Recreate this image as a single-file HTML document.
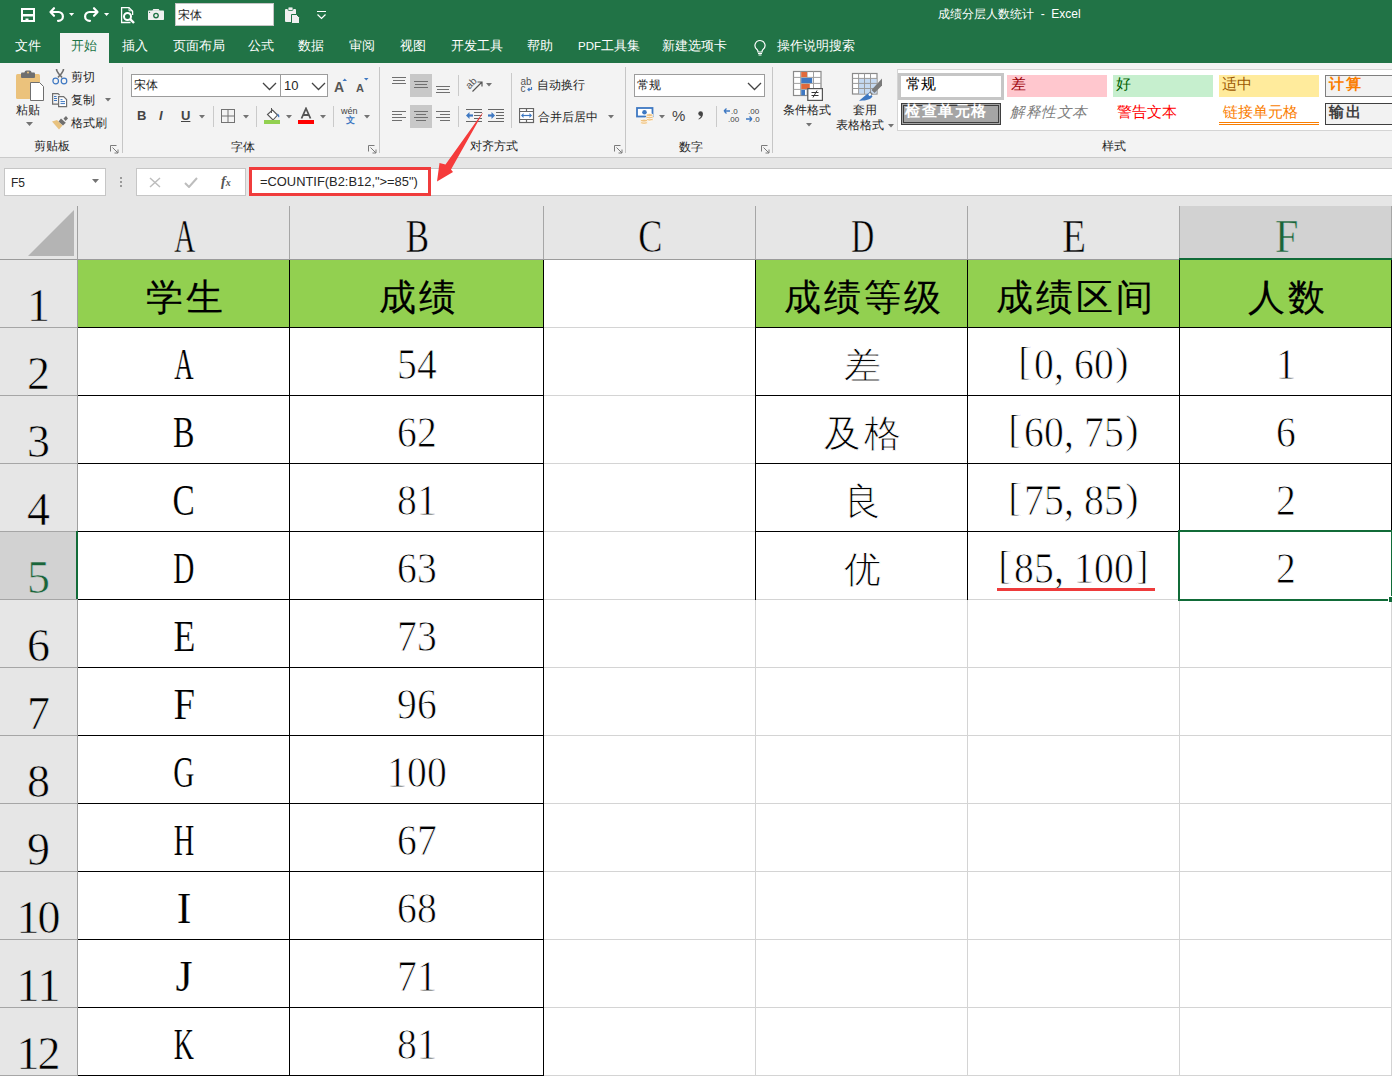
<!DOCTYPE html><html><head><meta charset="utf-8"><style>
html,body{margin:0;padding:0;}
body{width:1392px;height:1076px;overflow:hidden;position:relative;background:#fff;}
.t{position:absolute;white-space:nowrap;line-height:1.2;}
.b{position:absolute;}
.nar{display:inline-block;transform:scaleX(0.7);}
.h{display:inline-flex;width:20px;justify-content:center;}
.w{display:inline-flex;width:40px;justify-content:center;}
</style></head><body><div id="root">
<div class="b" style="left:0px;top:0px;width:1392px;height:63px;background:#217346"></div>
<svg class="b" style="left:20px;top:7px;" width="16" height="16" viewBox="0 0 16 16"><rect x="2" y="2" width="12" height="12" fill="none" stroke="#fff" stroke-width="2"/><rect x="3" y="7" width="10" height="2.5" fill="#fff"/><rect x="5.5" y="11.5" width="3" height="3.5" fill="#fff"/></svg>
<svg class="b" style="left:48px;top:6px;" width="28" height="16" viewBox="0 0 28 16"><path d="M6 2.2L2.5 6 6 9.8" fill="none" stroke="#fff" stroke-width="2.2" stroke-linejoin="round" stroke-linecap="round"/><path d="M3 6H10.5a4.4 4.4 0 0 1 0 8.8H10" fill="none" stroke="#fff" stroke-width="2.2" stroke-linecap="round"/><path d="M21 7h5.2l-2.6 3z" fill="#fff"/></svg>
<svg class="b" style="left:83px;top:6px;" width="28" height="16" viewBox="0 0 28 16"><path d="M11 2.2L14.5 6 11 9.8" fill="none" stroke="#fff" stroke-width="2.2" stroke-linejoin="round" stroke-linecap="round"/><path d="M14 6H6.5a4.4 4.4 0 0 0 0 8.8H7" fill="none" stroke="#fff" stroke-width="2.2" stroke-linecap="round"/><path d="M21 7h5.2l-2.6 3z" fill="#fff"/></svg>
<svg class="b" style="left:120px;top:6px;" width="16" height="18" viewBox="0 0 16 18"><path d="M10.5 16.5H1.6V1.6H9L12.6 5.2V9" fill="none" stroke="#fff" stroke-width="1.3"/><path d="M9 1.6v3.2h3.4" fill="none" stroke="#fff" stroke-width="0.9"/><circle cx="7.5" cy="10.5" r="3.5" fill="none" stroke="#fff" stroke-width="2"/><path d="M10.2 13.2L14 17" stroke="#fff" stroke-width="2.4"/></svg>
<svg class="b" style="left:147px;top:8px;" width="18" height="14" viewBox="0 0 18 14"><rect x="1" y="2.5" width="16" height="9.5" rx="0.8" fill="#f0f0f0"/><path d="M5.3 2.8L6.3 1H11.7L12.7 2.8z" fill="#f0f0f0"/><circle cx="9" cy="7.6" r="2.9" fill="#217346"/><circle cx="9" cy="7.6" r="1.5" fill="#f0f0f0"/><circle cx="2.6" cy="4.3" r="0.6" fill="#217346"/></svg>
<div class="b" style="left:175px;top:3px;width:99px;height:23px;background:#fff;border:1px solid #c6c6c6;box-sizing:border-box"></div>
<div class="t" style="left:178px;top:8px;font-size:12px;color:#262626;font-weight:normal;font-family:'Liberation Sans', sans-serif;">宋体</div>
<svg class="b" style="left:284px;top:6px;" width="20" height="18" viewBox="0 0 20 18"><rect x="1" y="3" width="11" height="13" rx="1" fill="#f0f0f0"/><rect x="4" y="1" width="5" height="3.5" rx="1" fill="#f0f0f0" stroke="#217346" stroke-width="0.8"/><path d="M7.5 8.5h5l3 3v6h-8z" fill="#f0f0f0" stroke="#217346" stroke-width="1"/></svg>
<svg class="b" style="left:316px;top:10px;" width="11" height="10" viewBox="0 0 11 10"><path d="M1 1.5h9" stroke="#fff" stroke-width="1"/><path d="M1.5 4.5l4 4 4-4" fill="none" stroke="#fff" stroke-width="1.2"/></svg>
<div class="t" style="left:938px;top:7px;font-size:12px;color:#fff;font-weight:normal;font-family:'Liberation Sans', sans-serif;">成绩分层人数统计&nbsp;&nbsp;-&nbsp;&nbsp;Excel</div>
<div class="b" style="left:60px;top:33px;width:49px;height:30px;background:#f3f3f3"></div>
<div class="t" style="left:15px;top:39px;font-size:12.5px;color:#fff;font-weight:normal;font-family:'Liberation Sans', sans-serif;">文件</div>
<div class="t" style="left:71px;top:39px;font-size:12.5px;color:#217346;font-weight:normal;font-family:'Liberation Sans', sans-serif;">开始</div>
<div class="t" style="left:122px;top:39px;font-size:12.5px;color:#fff;font-weight:normal;font-family:'Liberation Sans', sans-serif;">插入</div>
<div class="t" style="left:173px;top:39px;font-size:12.5px;color:#fff;font-weight:normal;font-family:'Liberation Sans', sans-serif;">页面布局</div>
<div class="t" style="left:248px;top:39px;font-size:12.5px;color:#fff;font-weight:normal;font-family:'Liberation Sans', sans-serif;">公式</div>
<div class="t" style="left:298px;top:39px;font-size:12.5px;color:#fff;font-weight:normal;font-family:'Liberation Sans', sans-serif;">数据</div>
<div class="t" style="left:349px;top:39px;font-size:12.5px;color:#fff;font-weight:normal;font-family:'Liberation Sans', sans-serif;">审阅</div>
<div class="t" style="left:400px;top:39px;font-size:12.5px;color:#fff;font-weight:normal;font-family:'Liberation Sans', sans-serif;">视图</div>
<div class="t" style="left:451px;top:39px;font-size:12.5px;color:#fff;font-weight:normal;font-family:'Liberation Sans', sans-serif;">开发工具</div>
<div class="t" style="left:527px;top:39px;font-size:12.5px;color:#fff;font-weight:normal;font-family:'Liberation Sans', sans-serif;">帮助</div>
<div class="t" style="left:578px;top:39px;font-size:12.5px;color:#fff;font-weight:normal;font-family:'Liberation Sans', sans-serif;"><span style="font-size:11.5px">PDF</span>工具集</div>
<div class="t" style="left:662px;top:39px;font-size:12.5px;color:#fff;font-weight:normal;font-family:'Liberation Sans', sans-serif;">新建选项卡</div>
<div class="t" style="left:777px;top:39px;font-size:12.5px;color:#fff;font-weight:normal;font-family:'Liberation Sans', sans-serif;">操作说明搜索</div>
<svg class="b" style="left:752px;top:39px;" width="16" height="17" viewBox="0 0 16 17"><path d="M8 1.5a5 5 0 0 0-3 9c0.8 0.7 1 1.5 1 2.5h4c0-1 0.2-1.8 1-2.5a5 5 0 0 0-3-9z" fill="none" stroke="#fff" stroke-width="1.2"/><path d="M6 14.5h4M6.5 16h3" stroke="#fff" stroke-width="1"/></svg>
<div class="b" style="left:0px;top:63px;width:1392px;height:94px;background:#f3f3f3"></div>
<div class="b" style="left:0px;top:157px;width:1392px;height:1px;background:#cacaca"></div>
<div class="b" style="left:122px;top:67px;width:1px;height:86px;background:#c6c6c6"></div>
<div class="b" style="left:379px;top:67px;width:1px;height:86px;background:#c6c6c6"></div>
<div class="b" style="left:625px;top:67px;width:1px;height:86px;background:#c6c6c6"></div>
<div class="b" style="left:772px;top:67px;width:1px;height:86px;background:#c6c6c6"></div>
<svg class="b" style="left:15px;top:70px;" width="30" height="32" viewBox="0 0 30 32"><rect x="1" y="4" width="24" height="25" rx="1.5" fill="#ebc27c"/><rect x="6" y="2.5" width="14" height="5.5" rx="1" fill="#6f6f6f"/><rect x="9.5" y="0.5" width="7" height="4" rx="2" fill="#6f6f6f"/><circle cx="13" cy="2.6" r="1" fill="#ebc27c"/><path d="M15.5 12.5h9l4 4v14h-13z" fill="#fff" stroke="#6f6f6f" stroke-width="1"/></svg>
<div class="t" style="left:16px;top:103px;font-size:12px;color:#262626;font-weight:normal;font-family:'Liberation Sans', sans-serif;">粘贴</div>
<svg class="b" style="left:26px;top:122px;" width="7" height="5" viewBox="0 0 7 5"><path d="M0 0h7l-3.5 4z" fill="#737373"/></svg>
<svg class="b" style="left:52px;top:68px;" width="16" height="17" viewBox="0 0 16 17"><path d="M4.5 1c0 3 2.5 5 5.5 8.5M11.5 1c0 3-2.5 5-5.5 8.5" fill="none" stroke="#6f6f6f" stroke-width="1.6"/><circle cx="3.7" cy="13" r="2.8" fill="none" stroke="#3e78c2" stroke-width="1.2"/><circle cx="12" cy="13" r="2.8" fill="none" stroke="#3e78c2" stroke-width="1.2"/></svg>
<div class="t" style="left:71px;top:70px;font-size:12px;color:#262626;font-weight:normal;font-family:'Liberation Sans', sans-serif;">剪切</div>
<svg class="b" style="left:51px;top:92px;" width="18" height="17" viewBox="0 0 18 17"><path d="M7 12.2H1.6V1.6H7L8.6 3.2" fill="none" stroke="#6f6f6f" stroke-width="1.2"/><path d="M3 4.5h2.5M3 6.5h3M3 8.5h3" stroke="#3e78c2" stroke-width="1"/><path d="M7.6 4.6H12.6L15.6 7.6V14.6H7.6Z" fill="#fff" stroke="#6f6f6f" stroke-width="1.2"/><path d="M9.5 7.6h2M9.5 9.6h4.5M9.5 11.6h4.5" stroke="#3e78c2" stroke-width="1"/></svg>
<div class="t" style="left:71px;top:93px;font-size:12px;color:#262626;font-weight:normal;font-family:'Liberation Sans', sans-serif;">复制</div>
<svg class="b" style="left:105px;top:98px;" width="6" height="4" viewBox="0 0 6 4"><path d="M0 0h6l-3 3.5z" fill="#737373"/></svg>
<svg class="b" style="left:51px;top:113px;" width="18" height="18" viewBox="0 0 18 18"><path d="M1 8.5L6 7L11.5 12.5L8 16.5Z" fill="#e8c27f"/><path d="M7.5 8.5L10 5.5L14.8 9.7L12 12.5Z" fill="#6f6f6f"/><path d="M12.5 5.5L15 3L17 5.5L14.5 8Z" fill="#6f6f6f"/></svg>
<div class="t" style="left:71px;top:116px;font-size:12px;color:#262626;font-weight:normal;font-family:'Liberation Sans', sans-serif;">格式刷</div>
<div class="t" style="left:34px;top:139px;font-size:12px;color:#262626;font-weight:normal;font-family:'Liberation Sans', sans-serif;">剪贴板</div>
<svg class="b" style="left:110px;top:145px;" width="9" height="9" viewBox="0 0 9 9"><path d="M0.5 0.5h6M0.5 0.5v6" stroke="#7a7a7a" stroke-width="1"/><path d="M2.5 2.5l5.5 5.5M8 4.5v3.5h-3.5" stroke="#7a7a7a" stroke-width="1" fill="none"/></svg>
<div class="b" style="left:131px;top:74px;width:150px;height:23px;background:#fff;border:1px solid #9c9c9c;box-sizing:border-box"></div>
<div class="b" style="left:280px;top:74px;width:48px;height:23px;background:#fff;border:1px solid #9c9c9c;box-sizing:border-box"></div>
<div class="t" style="left:134px;top:78px;font-size:12px;color:#262626;font-weight:normal;font-family:'Liberation Sans', sans-serif;">宋体</div>
<div class="t" style="left:284px;top:78px;font-size:13px;color:#262626;font-weight:normal;font-family:'Liberation Sans', sans-serif;">10</div>
<svg class="b" style="left:262px;top:82px;" width="15" height="9" viewBox="0 0 15 9"><path d="M1 1l6.5 6.5L14 1" fill="none" stroke="#444" stroke-width="1.3"/></svg>
<svg class="b" style="left:311px;top:82px;" width="15" height="9" viewBox="0 0 15 9"><path d="M1 1l6.5 6.5L14 1" fill="none" stroke="#444" stroke-width="1.3"/></svg>
<svg class="b" style="left:333px;top:76px;" width="18" height="18" viewBox="0 0 18 18"><text x="1" y="15.5" font-family="Liberation Sans" font-size="14" font-weight="bold" fill="#555">A</text><path d="M9.5 5h4.5l-2.25-2.6z" fill="#3e78c2"/></svg>
<svg class="b" style="left:355px;top:76px;" width="18" height="18" viewBox="0 0 18 18"><text x="1" y="15.5" font-family="Liberation Sans" font-size="11" font-weight="bold" fill="#555">A</text><path d="M9 2h4.5l-2.25 2.6z" fill="#3e78c2"/></svg>
<div class="t" style="left:137px;top:108px;font-size:13px;color:#444;font-weight:bold;font-family:'Liberation Sans', sans-serif;">B</div>
<div class="t" style="left:159px;top:108px;font-size:13px;color:#444;font-weight:bold;font-family:'Liberation Sans', sans-serif;font-style:italic">I</div>
<div class="t" style="left:181px;top:108px;font-size:13px;color:#444;font-weight:bold;font-family:'Liberation Sans', sans-serif;text-decoration:underline">U</div>
<svg class="b" style="left:199px;top:115px;" width="6" height="4" viewBox="0 0 6 4"><path d="M0 0h6l-3 3.5z" fill="#737373"/></svg>
<div class="b" style="left:213px;top:106px;width:1px;height:21px;background:#cacaca"></div>
<svg class="b" style="left:221px;top:109px;" width="14" height="14" viewBox="0 0 14 14"><rect x="0.5" y="0.5" width="13" height="13" fill="none" stroke="#737373"/><path d="M7 0.5v13M0.5 7h13" stroke="#737373"/></svg>
<svg class="b" style="left:243px;top:115px;" width="6" height="4" viewBox="0 0 6 4"><path d="M0 0h6l-3 3.5z" fill="#737373"/></svg>
<div class="b" style="left:256px;top:106px;width:1px;height:21px;background:#cacaca"></div>
<svg class="b" style="left:264px;top:107px;" width="18" height="18" viewBox="0 0 18 18"><path d="M3.5 7.5l5-4.5 5 5-4.5 5z" fill="#fff" stroke="#555" stroke-width="1.1"/><path d="M7.5 1v5" stroke="#555" stroke-width="1"/><path d="M13.5 6.5c1.5 1 2.5 2.5 1.5 4-1-.5-1.8-2-1.5-4z" fill="#3e78c2"/><rect x="0" y="13" width="16" height="4" fill="#92d050"/></svg>
<svg class="b" style="left:286px;top:115px;" width="6" height="4" viewBox="0 0 6 4"><path d="M0 0h6l-3 3.5z" fill="#737373"/></svg>
<svg class="b" style="left:298px;top:107px;" width="17" height="18" viewBox="0 0 17 18"><path d="M3.5 11.5L8 1.5l4.5 10M5.2 8h5.6" fill="none" stroke="#555" stroke-width="1.8"/><rect x="0" y="13" width="16" height="4" fill="#ff0000"/></svg>
<svg class="b" style="left:320px;top:115px;" width="6" height="4" viewBox="0 0 6 4"><path d="M0 0h6l-3 3.5z" fill="#737373"/></svg>
<div class="b" style="left:333px;top:106px;width:1px;height:21px;background:#cacaca"></div>
<div class="t" style="left:341px;top:107px;font-size:9px;color:#444;font-weight:normal;font-family:'Liberation Sans', sans-serif;line-height:9px">wén</div>
<div class="t" style="left:345.5px;top:116px;font-size:9px;color:#3e78c2;font-weight:bold;font-family:'Liberation Sans', sans-serif;line-height:9px">文</div>
<svg class="b" style="left:364px;top:115px;" width="6" height="4" viewBox="0 0 6 4"><path d="M0 0h6l-3 3.5z" fill="#737373"/></svg>
<div class="t" style="left:231px;top:140px;font-size:12px;color:#262626;font-weight:normal;font-family:'Liberation Sans', sans-serif;">字体</div>
<svg class="b" style="left:368px;top:145px;" width="9" height="9" viewBox="0 0 9 9"><path d="M0.5 0.5h6M0.5 0.5v6" stroke="#7a7a7a" stroke-width="1"/><path d="M2.5 2.5l5.5 5.5M8 4.5v3.5h-3.5" stroke="#7a7a7a" stroke-width="1" fill="none"/></svg>
<div class="b" style="left:410px;top:74px;width:22px;height:23px;background:#c8c8c8"></div>
<div class="b" style="left:410px;top:105px;width:22px;height:23px;background:#c8c8c8"></div>
<div class="b" style="left:392px;top:77px;width:14px;height:1px;background:#6f6f6f"></div>
<div class="b" style="left:393px;top:80px;width:12px;height:1px;background:#6f6f6f"></div>
<div class="b" style="left:392px;top:83px;width:14px;height:1px;background:#6f6f6f"></div>
<div class="b" style="left:414px;top:81px;width:14px;height:1px;background:#6f6f6f"></div>
<div class="b" style="left:415px;top:84px;width:12px;height:1px;background:#6f6f6f"></div>
<div class="b" style="left:414px;top:87px;width:14px;height:1px;background:#6f6f6f"></div>
<div class="b" style="left:436px;top:86px;width:14px;height:1px;background:#6f6f6f"></div>
<div class="b" style="left:437px;top:89px;width:12px;height:1px;background:#6f6f6f"></div>
<div class="b" style="left:436px;top:92px;width:14px;height:1px;background:#6f6f6f"></div>
<div class="b" style="left:392px;top:111px;width:14px;height:1px;background:#6f6f6f"></div>
<div class="b" style="left:392px;top:114px;width:10px;height:1px;background:#6f6f6f"></div>
<div class="b" style="left:392px;top:117px;width:14px;height:1px;background:#6f6f6f"></div>
<div class="b" style="left:392px;top:120px;width:10px;height:1px;background:#6f6f6f"></div>
<div class="b" style="left:414px;top:111px;width:14px;height:1px;background:#6f6f6f"></div>
<div class="b" style="left:416px;top:114px;width:10px;height:1px;background:#6f6f6f"></div>
<div class="b" style="left:414px;top:117px;width:14px;height:1px;background:#6f6f6f"></div>
<div class="b" style="left:416px;top:120px;width:10px;height:1px;background:#6f6f6f"></div>
<div class="b" style="left:436px;top:111px;width:14px;height:1px;background:#6f6f6f"></div>
<div class="b" style="left:440px;top:114px;width:10px;height:1px;background:#6f6f6f"></div>
<div class="b" style="left:436px;top:117px;width:14px;height:1px;background:#6f6f6f"></div>
<div class="b" style="left:440px;top:120px;width:10px;height:1px;background:#6f6f6f"></div>
<div class="b" style="left:458px;top:75px;width:1px;height:21px;background:#cacaca"></div>
<div class="b" style="left:458px;top:106px;width:1px;height:21px;background:#cacaca"></div>
<svg class="b" style="left:464px;top:76px;" width="20" height="18" viewBox="0 0 20 18"><text x="0" y="0" font-family="Liberation Sans" font-size="10" fill="#555" transform="translate(5.5 13.5) rotate(-45)">ab</text><path d="M8.5 15.5L17.5 6.5M13.5 6h4.5v4.5" fill="none" stroke="#555" stroke-width="1.2"/></svg>
<svg class="b" style="left:486px;top:83px;" width="6" height="4" viewBox="0 0 6 4"><path d="M0 0h6l-3 3.5z" fill="#737373"/></svg>
<div class="b" style="left:511px;top:73px;width:1px;height:55px;background:#cacaca"></div>
<svg class="b" style="left:520px;top:76px;" width="14" height="17" viewBox="0 0 14 17"><text x="0.5" y="8.5" font-family="Liberation Sans" font-size="10" fill="#555">ab</text><text x="0.5" y="15.8" font-family="Liberation Sans" font-size="10" fill="#555">c</text><path d="M11.5 11v2.5h-3.5M9.5 12l-1.5 1.5 1.5 1.5" fill="none" stroke="#3e78c2" stroke-width="1.2"/></svg>
<div class="t" style="left:537px;top:78px;font-size:12px;color:#262626;font-weight:normal;font-family:'Liberation Sans', sans-serif;">自动换行</div>
<svg class="b" style="left:466px;top:109px;" width="17" height="13" viewBox="0 0 17 13"><path d="M0 0.5h16M8 3.5h8M8 6.5h8M8 9.5h8M0 12.5h16" stroke="#666" stroke-width="1"/><path d="M7 6.5H2.5" stroke="#3e78c2" stroke-width="2.2"/><path d="M0 6.5l3.5-3.5v7z" fill="#3e78c2"/></svg>
<svg class="b" style="left:488px;top:109px;" width="17" height="13" viewBox="0 0 17 13"><path d="M0 0.5h16M8 3.5h8M8 6.5h8M8 9.5h8M0 12.5h16" stroke="#666" stroke-width="1"/><path d="M0 6.5H4.5" stroke="#3e78c2" stroke-width="2.2"/><path d="M7 6.5l-3.5-3.5v7z" fill="#3e78c2"/></svg>
<svg class="b" style="left:519px;top:108px;" width="16" height="16" viewBox="0 0 16 16"><rect x="0.5" y="0.5" width="14" height="14" fill="#fff" stroke="#666" stroke-width="1.2"/><path d="M0.5 3.5h14M0.5 11.5h14M7.5 0.5v3M7.5 11.5v3" stroke="#666" stroke-width="1.2"/><path d="M3.5 7.5h8" stroke="#3e78c2" stroke-width="1.2"/><path d="M2 7.5l2.5-2.5v5zM13 7.5l-2.5-2.5v5z" fill="#3e78c2"/></svg>
<div class="t" style="left:538px;top:110px;font-size:12px;color:#262626;font-weight:normal;font-family:'Liberation Sans', sans-serif;">合并后居中</div>
<svg class="b" style="left:608px;top:115px;" width="6" height="4" viewBox="0 0 6 4"><path d="M0 0h6l-3 3.5z" fill="#737373"/></svg>
<div class="t" style="left:470px;top:139px;font-size:12px;color:#262626;font-weight:normal;font-family:'Liberation Sans', sans-serif;">对齐方式</div>
<svg class="b" style="left:614px;top:145px;" width="9" height="9" viewBox="0 0 9 9"><path d="M0.5 0.5h6M0.5 0.5v6" stroke="#7a7a7a" stroke-width="1"/><path d="M2.5 2.5l5.5 5.5M8 4.5v3.5h-3.5" stroke="#7a7a7a" stroke-width="1" fill="none"/></svg>
<div class="b" style="left:634px;top:74px;width:131px;height:23px;background:#fff;border:1px solid #9c9c9c;box-sizing:border-box"></div>
<div class="t" style="left:637px;top:78px;font-size:12px;color:#262626;font-weight:normal;font-family:'Liberation Sans', sans-serif;">常规</div>
<svg class="b" style="left:747px;top:82px;" width="15" height="9" viewBox="0 0 15 9"><path d="M1 1l6.5 6.5L14 1" fill="none" stroke="#444" stroke-width="1.3"/></svg>
<svg class="b" style="left:636px;top:107px;" width="18" height="18" viewBox="0 0 18 18"><rect x="1" y="1" width="15.5" height="8.5" fill="#fff" stroke="#3e78c2" stroke-width="1.8"/><circle cx="8.5" cy="5.2" r="2.3" fill="#3e78c2"/><g fill="#efc27f" stroke="#fff" stroke-width="0.8"><ellipse cx="13.5" cy="12.5" rx="3.6" ry="1.5"/><ellipse cx="13.5" cy="10.3" rx="3.6" ry="1.5"/><ellipse cx="13.5" cy="8.1" rx="3.6" ry="1.5"/><ellipse cx="8" cy="15.8" rx="3.6" ry="1.5"/><ellipse cx="8" cy="13.6" rx="3.6" ry="1.5"/></g></svg>
<svg class="b" style="left:659px;top:115px;" width="6" height="4" viewBox="0 0 6 4"><path d="M0 0h6l-3 3.5z" fill="#737373"/></svg>
<div class="t" style="left:672px;top:107px;font-size:15px;color:#444;font-weight:normal;font-family:'Liberation Sans', sans-serif;">%</div>
<svg class="b" style="left:697px;top:111px;" width="8" height="9" viewBox="0 0 8 9"><circle cx="3.6" cy="2.6" r="2.3" fill="#444"/><path d="M5.8 2.8C6 5.5 4.5 7.5 1.8 8.6L1.4 7.9C3.2 6.8 4 5.6 3.8 4.2z" fill="#444"/></svg>
<div class="b" style="left:716px;top:106px;width:1px;height:21px;background:#cacaca"></div>
<svg class="b" style="left:723px;top:107px;" width="17" height="16" viewBox="0 0 17 16"><path d="M1 4h6M1 4l2.5-2.5M1 4l2.5 2.5" fill="none" stroke="#3e78c2" stroke-width="1.3"/><text x="8" y="7" font-family="Liberation Sans" font-size="8" fill="#444">.0</text><text x="5" y="15" font-family="Liberation Sans" font-size="8" fill="#444">.00</text></svg>
<svg class="b" style="left:745px;top:107px;" width="17" height="16" viewBox="0 0 17 16"><text x="3" y="7" font-family="Liberation Sans" font-size="8" fill="#444">.00</text><path d="M1 12h6M7 12l-2.5-2.5M7 12l-2.5 2.5" fill="none" stroke="#3e78c2" stroke-width="1.3"/><text x="8" y="15" font-family="Liberation Sans" font-size="8" fill="#444">.0</text></svg>
<div class="t" style="left:679px;top:140px;font-size:12px;color:#262626;font-weight:normal;font-family:'Liberation Sans', sans-serif;">数字</div>
<svg class="b" style="left:761px;top:145px;" width="9" height="9" viewBox="0 0 9 9"><path d="M0.5 0.5h6M0.5 0.5v6" stroke="#7a7a7a" stroke-width="1"/><path d="M2.5 2.5l5.5 5.5M8 4.5v3.5h-3.5" stroke="#7a7a7a" stroke-width="1" fill="none"/></svg>
<svg class="b" style="left:792px;top:70px;" width="32" height="32" viewBox="0 0 32 32"><rect x="1.5" y="1.5" width="27.5" height="24" fill="#fff" stroke="#8a8a8a" stroke-width="1.2"/><path d="M8.7 1.5v24M15.1 1.5v24M21.5 1.5v24M1.5 7.4h27.5M1.5 13.4h27.5M1.5 19.4h27.5" stroke="#a0a0a0" stroke-width="1"/><rect x="9.2" y="2" width="5.8" height="5" fill="#e06a3b"/><rect x="9.2" y="8" width="11" height="5" fill="#3e78c2"/><rect x="9.2" y="14" width="8.6" height="5" fill="#e06a3b"/><rect x="9.2" y="20" width="3.8" height="5.3" fill="#3e78c2"/><rect x="15.8" y="18.6" width="14.6" height="11.8" fill="#fff" stroke="#555" stroke-width="1.2"/><path d="M19.5 22.5h7M19.5 25.5h7M25 20.5l-4 7" stroke="#333" stroke-width="1"/></svg>
<div class="t" style="left:783px;top:103px;font-size:12px;color:#262626;font-weight:normal;font-family:'Liberation Sans', sans-serif;">条件格式</div>
<svg class="b" style="left:806px;top:123px;" width="6" height="4" viewBox="0 0 6 4"><path d="M0 0h6l-3 3.5z" fill="#737373"/></svg>
<svg class="b" style="left:851px;top:72px;" width="32" height="30" viewBox="0 0 32 30"><rect x="1.5" y="1.5" width="24.5" height="20.5" fill="#fff" stroke="#8a8a8a" stroke-width="1.2"/><rect x="8" y="7" width="17.5" height="14.5" fill="#c5d9f1"/><path d="M7.6 1.5v20.5M13.5 1.5v20.5M19.5 1.5v20.5M1.5 6.4h24.5M1.5 11.4h24.5M1.5 16.5h24.5" stroke="#9a9a9a" stroke-width="1"/><path d="M31 6.5V13.5L23.5 21L20.5 18z" fill="#7a7a7a"/><path d="M19.2 19.3l2.6 2.6-1.2 1.2-2.6-2.6z" fill="#7a7a7a"/><path d="M18 20.8l3.5 3.5c-1.5 3-6 4.6-13.5 4.4c3.5-2.5 6-5.5 10-7.9z" fill="#3e78c2"/><circle cx="18.8" cy="22.6" r="1.3" fill="#fff"/></svg>
<div class="t" style="left:853px;top:103px;font-size:12px;color:#262626;font-weight:normal;font-family:'Liberation Sans', sans-serif;">套用</div>
<div class="t" style="left:836px;top:118px;font-size:12px;color:#262626;font-weight:normal;font-family:'Liberation Sans', sans-serif;">表格格式</div>
<svg class="b" style="left:888px;top:124px;" width="6" height="4" viewBox="0 0 6 4"><path d="M0 0h6l-3 3.5z" fill="#737373"/></svg>
<div class="b" style="left:897px;top:69px;width:495px;height:62px;background:#fff;border:1px solid #d4d4d4;border-right:none;box-sizing:border-box"></div>
<div class="b" style="left:898px;top:73px;width:106px;height:27px;background:#fff;border:3px solid #c6c6c6;box-sizing:border-box"></div>
<div class="t" style="left:906px;top:76px;font-size:14.7px;color:#000;font-weight:normal;font-family:'Liberation Sans', sans-serif;">常规</div>
<div class="b" style="left:1007px;top:75px;width:100px;height:22px;background:#ffc7ce"></div>
<div class="t" style="left:1011px;top:76px;font-size:14.7px;color:#9c0006;font-weight:normal;font-family:'Liberation Sans', sans-serif;">差</div>
<div class="b" style="left:1113px;top:75px;width:100px;height:22px;background:#c6efce"></div>
<div class="t" style="left:1116px;top:76px;font-size:14.7px;color:#006100;font-weight:normal;font-family:'Liberation Sans', sans-serif;">好</div>
<div class="b" style="left:1219px;top:75px;width:100px;height:22px;background:#ffeb9c"></div>
<div class="t" style="left:1222px;top:76px;font-size:14.7px;color:#9c5700;font-weight:normal;font-family:'Liberation Sans', sans-serif;">适中</div>
<div class="b" style="left:1325px;top:75px;width:67px;height:22px;background:#f2f2f2;border:1px solid #7f7f7f;border-right:none;box-sizing:border-box"></div>
<div class="t" style="left:1329px;top:76px;font-size:14.7px;color:#fa7d00;font-weight:bold;font-family:'Liberation Sans', sans-serif;letter-spacing:1.5px">计算</div>
<div class="b" style="left:901px;top:103px;width:100px;height:22px;background:#a5a5a5;border:3px double #3f3f3f;box-sizing:border-box"></div>
<div class="t" style="left:905px;top:103px;font-size:14.7px;color:#fff;font-weight:bold;font-family:'Liberation Sans', sans-serif;letter-spacing:1.5px">检查单元格</div>
<div class="t" style="left:1010px;top:104px;font-size:14.7px;color:#7f7f7f;font-weight:normal;font-family:'Liberation Sans', sans-serif;font-style:italic;letter-spacing:0.5px">解释性文本</div>
<div class="t" style="left:1117px;top:104px;font-size:14.7px;color:#ff0000;font-weight:normal;font-family:'Liberation Sans', sans-serif;">警告文本</div>
<div class="t" style="left:1223px;top:104px;font-size:14.7px;color:#fa7d00;font-weight:normal;font-family:'Liberation Sans', sans-serif;">链接单元格</div>
<div class="b" style="left:1219px;top:122px;width:100px;height:3px;border-top:1px solid #fa7d00;border-bottom:1px solid #fa7d00;box-sizing:border-box"></div>
<div class="b" style="left:1325px;top:103px;width:67px;height:22px;background:#f2f2f2;border:1px solid #3f3f3f;border-right:none;box-sizing:border-box"></div>
<div class="t" style="left:1329px;top:104px;font-size:14.7px;color:#3f3f3f;font-weight:bold;font-family:'Liberation Sans', sans-serif;letter-spacing:1.5px">输出</div>
<div class="t" style="left:1102px;top:139px;font-size:12px;color:#262626;font-weight:normal;font-family:'Liberation Sans', sans-serif;">样式</div>
<div class="b" style="left:0px;top:158px;width:1392px;height:48px;background:#e6e6e6"></div>
<div class="b" style="left:4px;top:168px;width:102px;height:28px;background:#fff;border:1px solid #c6c6c6;box-sizing:border-box"></div>
<div class="t" style="left:11px;top:176px;font-size:12px;color:#262626;font-weight:normal;font-family:'Liberation Sans', sans-serif;">F5</div>
<svg class="b" style="left:92px;top:179px;" width="7" height="4" viewBox="0 0 7 4"><path d="M0 0h7l-3.5 4z" fill="#737373"/></svg>
<div class="b" style="left:120px;top:177px;width:2px;height:2px;background:#9a9a9a"></div>
<div class="b" style="left:120px;top:181px;width:2px;height:2px;background:#9a9a9a"></div>
<div class="b" style="left:120px;top:185px;width:2px;height:2px;background:#9a9a9a"></div>
<div class="b" style="left:136px;top:168px;width:110px;height:28px;background:#fff;border:1px solid #c6c6c6;box-sizing:border-box"></div>
<svg class="b" style="left:149px;top:177px;" width="12" height="11" viewBox="0 0 12 11"><path d="M1 1l10 9M11 1L1 10" stroke="#bdbdbd" stroke-width="1.5"/></svg>
<svg class="b" style="left:184px;top:177px;" width="14" height="11" viewBox="0 0 14 11"><path d="M1 6l4 4 8-9" fill="none" stroke="#bdbdbd" stroke-width="2"/></svg>
<div class="t" style="left:221px;top:174px;font-size:14px;color:#555;font-weight:bold;font-family:'Liberation Serif', serif;"><i>f</i><span style="font-size:10px"><i>x</i></span></div>
<div class="b" style="left:249px;top:168px;width:1143px;height:28px;background:#fff;border-top:1px solid #c6c6c6;border-bottom:1px solid #c6c6c6;box-sizing:border-box"></div>
<div class="t" style="left:260px;top:174px;font-size:12.9px;color:#262626;font-weight:normal;font-family:'Liberation Sans', sans-serif;">=COUNTIF(B2:B12,"&gt;=85")</div>
<div class="b" style="left:249px;top:167px;width:182px;height:29px;border:3px solid #f03c3c;box-sizing:border-box"></div>
<div class="b" style="left:0px;top:206px;width:1392px;height:870px;background:#fff"></div>
<div class="b" style="left:0px;top:206px;width:77px;height:870px;background:#e6e6e6"></div>
<div class="b" style="left:0px;top:206px;width:1392px;height:53px;background:#e6e6e6"></div>
<div class="b" style="left:1179px;top:206px;width:213px;height:53px;background:#d2d2d2"></div>
<div class="b" style="left:0px;top:531px;width:77px;height:68px;background:#d2d2d2"></div>
<svg class="b" style="left:28px;top:210px;" width="47" height="47" viewBox="0 0 47 47"><path d="M46 0V46H0z" fill="#b4b4b4"/></svg>
<div class="b" style="left:289px;top:259px;width:1px;height:817px;background:#d4d4d4"></div>
<div class="b" style="left:543px;top:259px;width:1px;height:817px;background:#d4d4d4"></div>
<div class="b" style="left:755px;top:259px;width:1px;height:817px;background:#d4d4d4"></div>
<div class="b" style="left:967px;top:259px;width:1px;height:817px;background:#d4d4d4"></div>
<div class="b" style="left:1179px;top:259px;width:1px;height:817px;background:#d4d4d4"></div>
<div class="b" style="left:1391px;top:259px;width:1px;height:817px;background:#d4d4d4"></div>
<div class="b" style="left:77px;top:259px;width:1315px;height:1px;background:#d4d4d4"></div>
<div class="b" style="left:77px;top:327px;width:1315px;height:1px;background:#d4d4d4"></div>
<div class="b" style="left:77px;top:395px;width:1315px;height:1px;background:#d4d4d4"></div>
<div class="b" style="left:77px;top:463px;width:1315px;height:1px;background:#d4d4d4"></div>
<div class="b" style="left:77px;top:531px;width:1315px;height:1px;background:#d4d4d4"></div>
<div class="b" style="left:77px;top:599px;width:1315px;height:1px;background:#d4d4d4"></div>
<div class="b" style="left:77px;top:667px;width:1315px;height:1px;background:#d4d4d4"></div>
<div class="b" style="left:77px;top:735px;width:1315px;height:1px;background:#d4d4d4"></div>
<div class="b" style="left:77px;top:803px;width:1315px;height:1px;background:#d4d4d4"></div>
<div class="b" style="left:77px;top:871px;width:1315px;height:1px;background:#d4d4d4"></div>
<div class="b" style="left:77px;top:939px;width:1315px;height:1px;background:#d4d4d4"></div>
<div class="b" style="left:77px;top:1007px;width:1315px;height:1px;background:#d4d4d4"></div>
<div class="b" style="left:77px;top:1075px;width:1315px;height:1px;background:#d4d4d4"></div>
<div class="b" style="left:289px;top:206px;width:1px;height:53px;background:#a6a6a6"></div>
<div class="b" style="left:543px;top:206px;width:1px;height:53px;background:#a6a6a6"></div>
<div class="b" style="left:755px;top:206px;width:1px;height:53px;background:#a6a6a6"></div>
<div class="b" style="left:967px;top:206px;width:1px;height:53px;background:#a6a6a6"></div>
<div class="b" style="left:1179px;top:206px;width:1px;height:53px;background:#a6a6a6"></div>
<div class="b" style="left:1391px;top:206px;width:1px;height:53px;background:#a6a6a6"></div>
<div class="b" style="left:0px;top:259px;width:1392px;height:1px;background:#9b9b9b"></div>
<div class="b" style="left:0px;top:327px;width:77px;height:1px;background:#a6a6a6"></div>
<div class="b" style="left:0px;top:395px;width:77px;height:1px;background:#a6a6a6"></div>
<div class="b" style="left:0px;top:463px;width:77px;height:1px;background:#a6a6a6"></div>
<div class="b" style="left:0px;top:531px;width:77px;height:1px;background:#a6a6a6"></div>
<div class="b" style="left:0px;top:599px;width:77px;height:1px;background:#a6a6a6"></div>
<div class="b" style="left:0px;top:667px;width:77px;height:1px;background:#a6a6a6"></div>
<div class="b" style="left:0px;top:735px;width:77px;height:1px;background:#a6a6a6"></div>
<div class="b" style="left:0px;top:803px;width:77px;height:1px;background:#a6a6a6"></div>
<div class="b" style="left:0px;top:871px;width:77px;height:1px;background:#a6a6a6"></div>
<div class="b" style="left:0px;top:939px;width:77px;height:1px;background:#a6a6a6"></div>
<div class="b" style="left:0px;top:1007px;width:77px;height:1px;background:#a6a6a6"></div>
<div class="b" style="left:0px;top:1075px;width:77px;height:1px;background:#a6a6a6"></div>
<div class="b" style="left:77px;top:259px;width:466px;height:68px;background:#92d050"></div>
<div class="b" style="left:755px;top:259px;width:636px;height:68px;background:#92d050"></div>
<div class="b" style="left:77px;top:259px;width:1px;height:817px;background:#000"></div>
<div class="b" style="left:289px;top:259px;width:1px;height:817px;background:#000"></div>
<div class="b" style="left:543px;top:259px;width:1px;height:817px;background:#000"></div>
<div class="b" style="left:77px;top:327px;width:467px;height:1px;background:#000"></div>
<div class="b" style="left:77px;top:395px;width:467px;height:1px;background:#000"></div>
<div class="b" style="left:77px;top:463px;width:467px;height:1px;background:#000"></div>
<div class="b" style="left:77px;top:531px;width:467px;height:1px;background:#000"></div>
<div class="b" style="left:77px;top:599px;width:467px;height:1px;background:#000"></div>
<div class="b" style="left:77px;top:667px;width:467px;height:1px;background:#000"></div>
<div class="b" style="left:77px;top:735px;width:467px;height:1px;background:#000"></div>
<div class="b" style="left:77px;top:803px;width:467px;height:1px;background:#000"></div>
<div class="b" style="left:77px;top:871px;width:467px;height:1px;background:#000"></div>
<div class="b" style="left:77px;top:939px;width:467px;height:1px;background:#000"></div>
<div class="b" style="left:77px;top:1007px;width:467px;height:1px;background:#000"></div>
<div class="b" style="left:77px;top:1075px;width:467px;height:1px;background:#000"></div>
<div class="b" style="left:755px;top:259px;width:1px;height:341px;background:#000"></div>
<div class="b" style="left:967px;top:259px;width:1px;height:341px;background:#000"></div>
<div class="b" style="left:1179px;top:259px;width:1px;height:341px;background:#000"></div>
<div class="b" style="left:1391px;top:259px;width:1px;height:341px;background:#000"></div>
<div class="b" style="left:755px;top:327px;width:637px;height:1px;background:#000"></div>
<div class="b" style="left:755px;top:395px;width:637px;height:1px;background:#000"></div>
<div class="b" style="left:755px;top:463px;width:637px;height:1px;background:#000"></div>
<div class="b" style="left:755px;top:531px;width:637px;height:1px;background:#000"></div>
<div class="b" style="left:0px;top:259px;width:1392px;height:1px;background:#9b9b9b"></div>
<div class="b" style="left:77px;top:206px;width:1px;height:870px;background:#a0a0a0"></div>
<div class="b" style="left:1179px;top:258px;width:213px;height:2px;background:#116b38"></div>
<div class="b" style="left:76px;top:531px;width:2px;height:68px;background:#116b38"></div>
<div class="b" style="left:1178px;top:530px;width:215px;height:71px;border:2px solid #116b38;box-sizing:border-box"></div>
<div class="b" style="left:1388px;top:596px;width:4px;height:6px;background:#fff"></div>
<div class="b" style="left:1389px;top:597px;width:3px;height:5px;background:#116b38"></div>
<div class="t" style="left:34.5px;width:300px;text-align:center;top:214px;font-size:46px;line-height:46px;color:#000;font-family:'Liberation Serif', serif;-webkit-text-stroke:0.5px #e6e6e6"><span class="h" style="width:23px"><span style="display:inline-block;transform:scaleX(0.631)">A</span></span></div>
<div class="t" style="left:267.5px;width:300px;text-align:center;top:214px;font-size:46px;line-height:46px;color:#000;font-family:'Liberation Serif', serif;-webkit-text-stroke:0.5px #e6e6e6"><span class="h" style="width:23px"><span style="display:inline-block;transform:scaleX(0.759)">B</span></span></div>
<div class="t" style="left:500.5px;width:300px;text-align:center;top:214px;font-size:46px;line-height:46px;color:#000;font-family:'Liberation Serif', serif;-webkit-text-stroke:0.5px #e6e6e6"><span class="h" style="width:23px"><span style="display:inline-block;transform:scaleX(0.786)">C</span></span></div>
<div class="t" style="left:712.5px;width:300px;text-align:center;top:214px;font-size:46px;line-height:46px;color:#000;font-family:'Liberation Serif', serif;-webkit-text-stroke:0.5px #e6e6e6"><span class="h" style="width:23px"><span style="display:inline-block;transform:scaleX(0.689)">D</span></span></div>
<div class="t" style="left:924.5px;width:300px;text-align:center;top:214px;font-size:46px;line-height:46px;color:#000;font-family:'Liberation Serif', serif;-webkit-text-stroke:0.5px #e6e6e6"><span class="h" style="width:23px"><span style="display:inline-block;transform:scaleX(0.845)">E</span></span></div>
<div class="t" style="left:1136.5px;width:300px;text-align:center;top:214px;font-size:46px;line-height:46px;color:#1a653a;font-family:'Liberation Serif', serif;-webkit-text-stroke:0.5px #d2d2d2"><span class="h" style="width:23px"><span style="display:inline-block;transform:scaleX(0.914)">F</span></span></div>
<div class="t" style="left:-111.5px;width:300px;text-align:center;top:283px;font-size:46px;line-height:46px;color:#000;font-family:'Liberation Serif', serif;-webkit-text-stroke:0.6px #e6e6e6"><span class="h" style="width:21px"><span style="display:inline-block;transform:scaleX(1.0)">1</span></span></div>
<div class="t" style="left:-111.5px;width:300px;text-align:center;top:351px;font-size:46px;line-height:46px;color:#000;font-family:'Liberation Serif', serif;-webkit-text-stroke:0.6px #e6e6e6"><span class="h" style="width:21px"><span style="display:inline-block;transform:scaleX(1.0)">2</span></span></div>
<div class="t" style="left:-111.5px;width:300px;text-align:center;top:419px;font-size:46px;line-height:46px;color:#000;font-family:'Liberation Serif', serif;-webkit-text-stroke:0.6px #e6e6e6"><span class="h" style="width:21px"><span style="display:inline-block;transform:scaleX(1.0)">3</span></span></div>
<div class="t" style="left:-111.5px;width:300px;text-align:center;top:487px;font-size:46px;line-height:46px;color:#000;font-family:'Liberation Serif', serif;-webkit-text-stroke:0.6px #e6e6e6"><span class="h" style="width:21px"><span style="display:inline-block;transform:scaleX(1.0)">4</span></span></div>
<div class="t" style="left:-111.5px;width:300px;text-align:center;top:555px;font-size:46px;line-height:46px;color:#1a653a;font-family:'Liberation Serif', serif;-webkit-text-stroke:0.6px #d2d2d2"><span class="h" style="width:21px"><span style="display:inline-block;transform:scaleX(1.0)">5</span></span></div>
<div class="t" style="left:-111.5px;width:300px;text-align:center;top:623px;font-size:46px;line-height:46px;color:#000;font-family:'Liberation Serif', serif;-webkit-text-stroke:0.6px #e6e6e6"><span class="h" style="width:21px"><span style="display:inline-block;transform:scaleX(1.0)">6</span></span></div>
<div class="t" style="left:-111.5px;width:300px;text-align:center;top:691px;font-size:46px;line-height:46px;color:#000;font-family:'Liberation Serif', serif;-webkit-text-stroke:0.6px #e6e6e6"><span class="h" style="width:21px"><span style="display:inline-block;transform:scaleX(1.0)">7</span></span></div>
<div class="t" style="left:-111.5px;width:300px;text-align:center;top:759px;font-size:46px;line-height:46px;color:#000;font-family:'Liberation Serif', serif;-webkit-text-stroke:0.6px #e6e6e6"><span class="h" style="width:21px"><span style="display:inline-block;transform:scaleX(1.0)">8</span></span></div>
<div class="t" style="left:-111.5px;width:300px;text-align:center;top:827px;font-size:46px;line-height:46px;color:#000;font-family:'Liberation Serif', serif;-webkit-text-stroke:0.6px #e6e6e6"><span class="h" style="width:21px"><span style="display:inline-block;transform:scaleX(1.0)">9</span></span></div>
<div class="t" style="left:-111.5px;width:300px;text-align:center;top:895px;font-size:46px;line-height:46px;color:#000;font-family:'Liberation Serif', serif;-webkit-text-stroke:0.6px #e6e6e6"><span class="h" style="width:21px"><span style="display:inline-block;transform:scaleX(1.0)">1</span></span><span class="h" style="width:21px"><span style="display:inline-block;transform:scaleX(1.0)">0</span></span></div>
<div class="t" style="left:-111.5px;width:300px;text-align:center;top:963px;font-size:46px;line-height:46px;color:#000;font-family:'Liberation Serif', serif;-webkit-text-stroke:0.6px #e6e6e6"><span class="h" style="width:21px"><span style="display:inline-block;transform:scaleX(1.0)">1</span></span><span class="h" style="width:21px"><span style="display:inline-block;transform:scaleX(1.0)">1</span></span></div>
<div class="t" style="left:-111.5px;width:300px;text-align:center;top:1031px;font-size:46px;line-height:46px;color:#000;font-family:'Liberation Serif', serif;-webkit-text-stroke:0.6px #e6e6e6"><span class="h" style="width:21px"><span style="display:inline-block;transform:scaleX(1.0)">1</span></span><span class="h" style="width:21px"><span style="display:inline-block;transform:scaleX(1.0)">2</span></span></div>
<div class="t" style="left:34.0px;width:300px;text-align:center;top:277px;font-size:40px;line-height:40px;color:#000;font-family:'Liberation Serif', serif;"><span class="w"><span style="font-size:37px;-webkit-text-stroke:0.15px #000;">学</span></span><span class="w"><span style="font-size:37px;-webkit-text-stroke:0.15px #000;">生</span></span></div>
<div class="t" style="left:267.0px;width:300px;text-align:center;top:277px;font-size:40px;line-height:40px;color:#000;font-family:'Liberation Serif', serif;"><span class="w"><span style="font-size:37px;-webkit-text-stroke:0.15px #000;">成</span></span><span class="w"><span style="font-size:37px;-webkit-text-stroke:0.15px #000;">绩</span></span></div>
<div class="t" style="left:712.0px;width:300px;text-align:center;top:277px;font-size:40px;line-height:40px;color:#000;font-family:'Liberation Serif', serif;"><span class="w"><span style="font-size:37px;-webkit-text-stroke:0.15px #000;">成</span></span><span class="w"><span style="font-size:37px;-webkit-text-stroke:0.15px #000;">绩</span></span><span class="w"><span style="font-size:37px;-webkit-text-stroke:0.15px #000;">等</span></span><span class="w"><span style="font-size:37px;-webkit-text-stroke:0.15px #000;">级</span></span></div>
<div class="t" style="left:924.0px;width:300px;text-align:center;top:277px;font-size:40px;line-height:40px;color:#000;font-family:'Liberation Serif', serif;"><span class="w"><span style="font-size:37px;-webkit-text-stroke:0.15px #000;">成</span></span><span class="w"><span style="font-size:37px;-webkit-text-stroke:0.15px #000;">绩</span></span><span class="w"><span style="font-size:37px;-webkit-text-stroke:0.15px #000;">区</span></span><span class="w"><span style="font-size:37px;-webkit-text-stroke:0.15px #000;">间</span></span></div>
<div class="t" style="left:1136.0px;width:300px;text-align:center;top:277px;font-size:40px;line-height:40px;color:#000;font-family:'Liberation Serif', serif;"><span class="w"><span style="font-size:37px;-webkit-text-stroke:0.15px #000;">人</span></span><span class="w"><span style="font-size:37px;-webkit-text-stroke:0.15px #000;">数</span></span></div>
<div class="t" style="left:34.0px;width:300px;text-align:center;top:345px;font-size:40px;line-height:40px;color:#000;font-family:'Liberation Serif', serif;-webkit-text-stroke:0.8px #fff;"><span class="h"><span style="font-size:44px;display:inline-block;transform:scaleX(0.6081946222791293);-webkit-text-stroke:0.2px #fff;">A</span></span></div>
<div class="t" style="left:267.0px;width:300px;text-align:center;top:345px;font-size:40px;line-height:40px;color:#000;font-family:'Liberation Serif', serif;-webkit-text-stroke:0.8px #fff;"><span class="h"><span style="font-size:44px;display:inline-block;transform:scaleX(0.9);">5</span></span><span class="h"><span style="font-size:44px;display:inline-block;transform:scaleX(0.9);">4</span></span></div>
<div class="t" style="left:34.0px;width:300px;text-align:center;top:413px;font-size:40px;line-height:40px;color:#000;font-family:'Liberation Serif', serif;-webkit-text-stroke:0.8px #fff;"><span class="h"><span style="font-size:44px;display:inline-block;transform:scaleX(0.7318952234206472);-webkit-text-stroke:0.2px #fff;">B</span></span></div>
<div class="t" style="left:267.0px;width:300px;text-align:center;top:413px;font-size:40px;line-height:40px;color:#000;font-family:'Liberation Serif', serif;-webkit-text-stroke:0.8px #fff;"><span class="h"><span style="font-size:44px;display:inline-block;transform:scaleX(0.9);">6</span></span><span class="h"><span style="font-size:44px;display:inline-block;transform:scaleX(0.9);">2</span></span></div>
<div class="t" style="left:34.0px;width:300px;text-align:center;top:481px;font-size:40px;line-height:40px;color:#000;font-family:'Liberation Serif', serif;-webkit-text-stroke:0.8px #fff;"><span class="h"><span style="font-size:44px;display:inline-block;transform:scaleX(0.7575757575757577);-webkit-text-stroke:0.2px #fff;">C</span></span></div>
<div class="t" style="left:267.0px;width:300px;text-align:center;top:481px;font-size:40px;line-height:40px;color:#000;font-family:'Liberation Serif', serif;-webkit-text-stroke:0.8px #fff;"><span class="h"><span style="font-size:44px;display:inline-block;transform:scaleX(0.9);">8</span></span><span class="h"><span style="font-size:44px;display:inline-block;transform:scaleX(0.9);">1</span></span></div>
<div class="t" style="left:34.0px;width:300px;text-align:center;top:549px;font-size:40px;line-height:40px;color:#000;font-family:'Liberation Serif', serif;-webkit-text-stroke:0.8px #fff;"><span class="h"><span style="font-size:44px;display:inline-block;transform:scaleX(0.6643356643356643);-webkit-text-stroke:0.2px #fff;">D</span></span></div>
<div class="t" style="left:267.0px;width:300px;text-align:center;top:549px;font-size:40px;line-height:40px;color:#000;font-family:'Liberation Serif', serif;-webkit-text-stroke:0.8px #fff;"><span class="h"><span style="font-size:44px;display:inline-block;transform:scaleX(0.9);">6</span></span><span class="h"><span style="font-size:44px;display:inline-block;transform:scaleX(0.9);">3</span></span></div>
<div class="t" style="left:34.0px;width:300px;text-align:center;top:617px;font-size:40px;line-height:40px;color:#000;font-family:'Liberation Serif', serif;-webkit-text-stroke:0.8px #fff;"><span class="h"><span style="font-size:44px;display:inline-block;transform:scaleX(0.8147512864493996);-webkit-text-stroke:0.2px #fff;">E</span></span></div>
<div class="t" style="left:267.0px;width:300px;text-align:center;top:617px;font-size:40px;line-height:40px;color:#000;font-family:'Liberation Serif', serif;-webkit-text-stroke:0.8px #fff;"><span class="h"><span style="font-size:44px;display:inline-block;transform:scaleX(0.9);">7</span></span><span class="h"><span style="font-size:44px;display:inline-block;transform:scaleX(0.9);">3</span></span></div>
<div class="t" style="left:34.0px;width:300px;text-align:center;top:685px;font-size:40px;line-height:40px;color:#000;font-family:'Liberation Serif', serif;-webkit-text-stroke:0.8px #fff;"><span class="h"><span style="font-size:44px;display:inline-block;transform:scaleX(0.8812615955473099);-webkit-text-stroke:0.2px #fff;">F</span></span></div>
<div class="t" style="left:267.0px;width:300px;text-align:center;top:685px;font-size:40px;line-height:40px;color:#000;font-family:'Liberation Serif', serif;-webkit-text-stroke:0.8px #fff;"><span class="h"><span style="font-size:44px;display:inline-block;transform:scaleX(0.9);">9</span></span><span class="h"><span style="font-size:44px;display:inline-block;transform:scaleX(0.9);">6</span></span></div>
<div class="t" style="left:34.0px;width:300px;text-align:center;top:753px;font-size:40px;line-height:40px;color:#000;font-family:'Liberation Serif', serif;-webkit-text-stroke:0.8px #fff;"><span class="h"><span style="font-size:44px;display:inline-block;transform:scaleX(0.6643356643356643);-webkit-text-stroke:0.2px #fff;">G</span></span></div>
<div class="t" style="left:267.0px;width:300px;text-align:center;top:753px;font-size:40px;line-height:40px;color:#000;font-family:'Liberation Serif', serif;-webkit-text-stroke:0.8px #fff;"><span class="h"><span style="font-size:44px;display:inline-block;transform:scaleX(0.9);">1</span></span><span class="h"><span style="font-size:44px;display:inline-block;transform:scaleX(0.9);">0</span></span><span class="h"><span style="font-size:44px;display:inline-block;transform:scaleX(0.9);">0</span></span></div>
<div class="t" style="left:34.0px;width:300px;text-align:center;top:821px;font-size:40px;line-height:40px;color:#000;font-family:'Liberation Serif', serif;-webkit-text-stroke:0.8px #fff;"><span class="h"><span style="font-size:44px;display:inline-block;transform:scaleX(0.6445047489823609);-webkit-text-stroke:0.2px #fff;">H</span></span></div>
<div class="t" style="left:267.0px;width:300px;text-align:center;top:821px;font-size:40px;line-height:40px;color:#000;font-family:'Liberation Serif', serif;-webkit-text-stroke:0.8px #fff;"><span class="h"><span style="font-size:44px;display:inline-block;transform:scaleX(0.9);">6</span></span><span class="h"><span style="font-size:44px;display:inline-block;transform:scaleX(0.9);">7</span></span></div>
<div class="t" style="left:34.0px;width:300px;text-align:center;top:889px;font-size:40px;line-height:40px;color:#000;font-family:'Liberation Serif', serif;-webkit-text-stroke:0.8px #fff;"><span class="h"><span style="font-size:44px;display:inline-block;transform:scaleX(1.0);-webkit-text-stroke:0.2px #fff;">I</span></span></div>
<div class="t" style="left:267.0px;width:300px;text-align:center;top:889px;font-size:40px;line-height:40px;color:#000;font-family:'Liberation Serif', serif;-webkit-text-stroke:0.8px #fff;"><span class="h"><span style="font-size:44px;display:inline-block;transform:scaleX(0.9);">6</span></span><span class="h"><span style="font-size:44px;display:inline-block;transform:scaleX(0.9);">8</span></span></div>
<div class="t" style="left:34.0px;width:300px;text-align:center;top:957px;font-size:40px;line-height:40px;color:#000;font-family:'Liberation Serif', serif;-webkit-text-stroke:0.8px #fff;"><span class="h"><span style="font-size:44px;display:inline-block;transform:scaleX(1.0);-webkit-text-stroke:0.2px #fff;">J</span></span></div>
<div class="t" style="left:267.0px;width:300px;text-align:center;top:957px;font-size:40px;line-height:40px;color:#000;font-family:'Liberation Serif', serif;-webkit-text-stroke:0.8px #fff;"><span class="h"><span style="font-size:44px;display:inline-block;transform:scaleX(0.9);">7</span></span><span class="h"><span style="font-size:44px;display:inline-block;transform:scaleX(0.9);">1</span></span></div>
<div class="t" style="left:34.0px;width:300px;text-align:center;top:1025px;font-size:40px;line-height:40px;color:#000;font-family:'Liberation Serif', serif;-webkit-text-stroke:0.8px #fff;"><span class="h"><span style="font-size:44px;display:inline-block;transform:scaleX(0.6350267379679144);-webkit-text-stroke:0.2px #fff;">K</span></span></div>
<div class="t" style="left:267.0px;width:300px;text-align:center;top:1025px;font-size:40px;line-height:40px;color:#000;font-family:'Liberation Serif', serif;-webkit-text-stroke:0.8px #fff;"><span class="h"><span style="font-size:44px;display:inline-block;transform:scaleX(0.9);">8</span></span><span class="h"><span style="font-size:44px;display:inline-block;transform:scaleX(0.9);">1</span></span></div>
<div class="t" style="left:712.0px;width:300px;text-align:center;top:345px;font-size:40px;line-height:40px;color:#000;font-family:'Liberation Serif', serif;-webkit-text-stroke:0.8px #fff;"><span class="w"><span style="font-size:37px;">差</span></span></div>
<div class="t" style="left:924.0px;width:300px;text-align:center;top:345px;font-size:40px;line-height:40px;color:#000;font-family:'Liberation Serif', serif;-webkit-text-stroke:0.8px #fff;"><span class="h"><span style="font-size:40px;display:inline-block;transform:translate(1px,-4px)">[</span></span><span class="h"><span style="font-size:44px;display:inline-block;transform:scaleX(0.9);">0</span></span><span class="h" style="justify-content:flex-start"><span style="font-size:44px;display:inline-block;transform:scaleX(0.9);transform-origin:0 0;margin-left:0px">,</span></span><span class="h"><span style="font-size:44px;display:inline-block;transform:scaleX(0.9);">6</span></span><span class="h"><span style="font-size:44px;display:inline-block;transform:scaleX(0.9);">0</span></span><span class="h"><span style="font-size:40px;display:inline-block;transform:translate(-2px,-4px)">)</span></span></div>
<div class="t" style="left:1136.0px;width:300px;text-align:center;top:345px;font-size:40px;line-height:40px;color:#000;font-family:'Liberation Serif', serif;-webkit-text-stroke:0.8px #fff;"><span class="h"><span style="font-size:44px;display:inline-block;transform:scaleX(0.9);">1</span></span></div>
<div class="t" style="left:712.0px;width:300px;text-align:center;top:413px;font-size:40px;line-height:40px;color:#000;font-family:'Liberation Serif', serif;-webkit-text-stroke:0.8px #fff;"><span class="w"><span style="font-size:37px;">及</span></span><span class="w"><span style="font-size:37px;">格</span></span></div>
<div class="t" style="left:924.0px;width:300px;text-align:center;top:413px;font-size:40px;line-height:40px;color:#000;font-family:'Liberation Serif', serif;-webkit-text-stroke:0.8px #fff;"><span class="h"><span style="font-size:40px;display:inline-block;transform:translate(1px,-4px)">[</span></span><span class="h"><span style="font-size:44px;display:inline-block;transform:scaleX(0.9);">6</span></span><span class="h"><span style="font-size:44px;display:inline-block;transform:scaleX(0.9);">0</span></span><span class="h" style="justify-content:flex-start"><span style="font-size:44px;display:inline-block;transform:scaleX(0.9);transform-origin:0 0;margin-left:0px">,</span></span><span class="h"><span style="font-size:44px;display:inline-block;transform:scaleX(0.9);">7</span></span><span class="h"><span style="font-size:44px;display:inline-block;transform:scaleX(0.9);">5</span></span><span class="h"><span style="font-size:40px;display:inline-block;transform:translate(-2px,-4px)">)</span></span></div>
<div class="t" style="left:1136.0px;width:300px;text-align:center;top:413px;font-size:40px;line-height:40px;color:#000;font-family:'Liberation Serif', serif;-webkit-text-stroke:0.8px #fff;"><span class="h"><span style="font-size:44px;display:inline-block;transform:scaleX(0.9);">6</span></span></div>
<div class="t" style="left:712.0px;width:300px;text-align:center;top:481px;font-size:40px;line-height:40px;color:#000;font-family:'Liberation Serif', serif;-webkit-text-stroke:0.8px #fff;"><span class="w"><span style="font-size:37px;">良</span></span></div>
<div class="t" style="left:924.0px;width:300px;text-align:center;top:481px;font-size:40px;line-height:40px;color:#000;font-family:'Liberation Serif', serif;-webkit-text-stroke:0.8px #fff;"><span class="h"><span style="font-size:40px;display:inline-block;transform:translate(1px,-4px)">[</span></span><span class="h"><span style="font-size:44px;display:inline-block;transform:scaleX(0.9);">7</span></span><span class="h"><span style="font-size:44px;display:inline-block;transform:scaleX(0.9);">5</span></span><span class="h" style="justify-content:flex-start"><span style="font-size:44px;display:inline-block;transform:scaleX(0.9);transform-origin:0 0;margin-left:0px">,</span></span><span class="h"><span style="font-size:44px;display:inline-block;transform:scaleX(0.9);">8</span></span><span class="h"><span style="font-size:44px;display:inline-block;transform:scaleX(0.9);">5</span></span><span class="h"><span style="font-size:40px;display:inline-block;transform:translate(-2px,-4px)">)</span></span></div>
<div class="t" style="left:1136.0px;width:300px;text-align:center;top:481px;font-size:40px;line-height:40px;color:#000;font-family:'Liberation Serif', serif;-webkit-text-stroke:0.8px #fff;"><span class="h"><span style="font-size:44px;display:inline-block;transform:scaleX(0.9);">2</span></span></div>
<div class="t" style="left:712.0px;width:300px;text-align:center;top:549px;font-size:40px;line-height:40px;color:#000;font-family:'Liberation Serif', serif;-webkit-text-stroke:0.8px #fff;"><span class="w"><span style="font-size:37px;">优</span></span></div>
<div class="t" style="left:924.0px;width:300px;text-align:center;top:549px;font-size:40px;line-height:40px;color:#000;font-family:'Liberation Serif', serif;-webkit-text-stroke:0.8px #fff;"><span class="h"><span style="font-size:40px;display:inline-block;transform:translate(1px,-4px)">[</span></span><span class="h"><span style="font-size:44px;display:inline-block;transform:scaleX(0.9);">8</span></span><span class="h"><span style="font-size:44px;display:inline-block;transform:scaleX(0.9);">5</span></span><span class="h" style="justify-content:flex-start"><span style="font-size:44px;display:inline-block;transform:scaleX(0.9);transform-origin:0 0;margin-left:0px">,</span></span><span class="h"><span style="font-size:44px;display:inline-block;transform:scaleX(0.9);">1</span></span><span class="h"><span style="font-size:44px;display:inline-block;transform:scaleX(0.9);">0</span></span><span class="h"><span style="font-size:44px;display:inline-block;transform:scaleX(0.9);">0</span></span><span class="h"><span style="font-size:40px;display:inline-block;transform:translate(-2px,-4px)">]</span></span></div>
<div class="t" style="left:1136.0px;width:300px;text-align:center;top:549px;font-size:40px;line-height:40px;color:#000;font-family:'Liberation Serif', serif;-webkit-text-stroke:0.8px #fff;"><span class="h"><span style="font-size:44px;display:inline-block;transform:scaleX(0.9);">2</span></span></div>
<div class="b" style="left:997px;top:588px;width:158px;height:3px;background:#ee3b3b"></div>
<svg class="b" style="left:430px;top:105px;" width="60" height="85" viewBox="0 0 60 85"><path d="M52.8 8 L21 64.5 L23 67 L7 76.5 L9.5 58 L15.5 59.5 L52.3 8 Z" fill="#f53b3b"/></svg>
</div>
</body></html>
